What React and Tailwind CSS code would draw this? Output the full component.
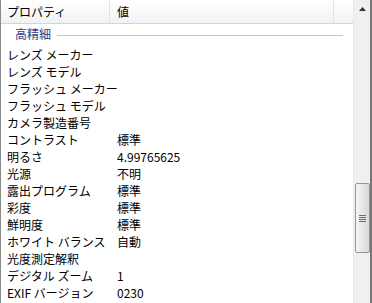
import React from 'react';

const rows = [
  ['レンズ メーカー', ''],
  ['レンズ モデル', ''],
  ['フラッシュ メーカー', ''],
  ['フラッシュ モデル', ''],
  ['カメラ製造番号', ''],
  ['コントラスト', '標準'],
  ['明るさ', '4.99765625'],
  ['光源', '不明'],
  ['露出プログラム', '標準'],
  ['彩度', '標準'],
  ['鮮明度', '標準'],
  ['ホワイト バランス', '自動'],
  ['光度測定解釈', ''],
  ['デジタル ズーム', '1'],
  ['EXIF バージョン', '0230'],
];

const App = () => {
  return (
    <div className="w-[372px] h-[303px] overflow-hidden bg-white flex border-l border-[#8a8a8a] font-['Noto_Sans_CJK_JP',sans-serif] text-[12px] text-black leading-none">
      <div className="flex-1 flex flex-col min-w-0">
        {/* header */}
        <div className="h-[24px] shrink-0 flex items-stretch border-b border-[#d5d5d5] bg-[linear-gradient(to_bottom,#ffffff,#f1f2f4)]">
          <div className="w-[109px] flex items-center pl-[6px] border-r border-[#e2e3e5]">プロパティ</div>
          <div className="w-[224px] flex items-center pl-[7px] border-r border-[#e2e3e5]">値</div>
          <div className="flex-1"></div>
        </div>

        {/* group */}
        <div className="h-[22px] shrink-0 flex items-center pl-[14px] pr-[10px] gap-[6px]">
          <span className="text-[#1e3a8a] pb-[2px]">高精細</span>
          <div className="flex-1 h-px bg-[#b9c9d0]"></div>
        </div>

        {rows.map(([k, v]) => (
          <div key={k} className="h-[17px] shrink-0 flex items-center">
            <div className="w-[110px] pl-[6px] whitespace-nowrap">{k}</div>
            <div className="pl-[6px] whitespace-nowrap">{v}</div>
          </div>
        ))}
      </div>

      {/* scrollbar */}
      <div className="w-[17px] shrink-0 bg-[#f0f0f0] border-l border-[#e8e8e8] flex flex-col items-center">
        <div className="h-[17px] w-full flex items-center justify-center">
          <svg width="7" height="4" viewBox="0 0 7 4">
            <path d="M0 4 L3.5 0 L7 4 Z" fill="#333" />
          </svg>
        </div>
        <div className="h-[166px]"></div>
        <div className="w-[15px] h-[70px] rounded-[2px] border border-[#979797] bg-[linear-gradient(to_right,#f4f4f4,#e4e4e4_60%,#d8d8d8)] flex flex-col items-center justify-center gap-px">
          <div className="w-[7px] h-px bg-[#6d6d6d]"></div>
          <div className="w-[7px] h-px bg-[#6d6d6d]"></div>
          <div className="w-[7px] h-px bg-[#6d6d6d]"></div>
          <div className="w-[7px] h-px bg-[#6d6d6d]"></div>
        </div>
      </div>
      <div className="w-[2px] shrink-0 bg-[#777777]"></div>
    </div>
  );
};

export default App;
